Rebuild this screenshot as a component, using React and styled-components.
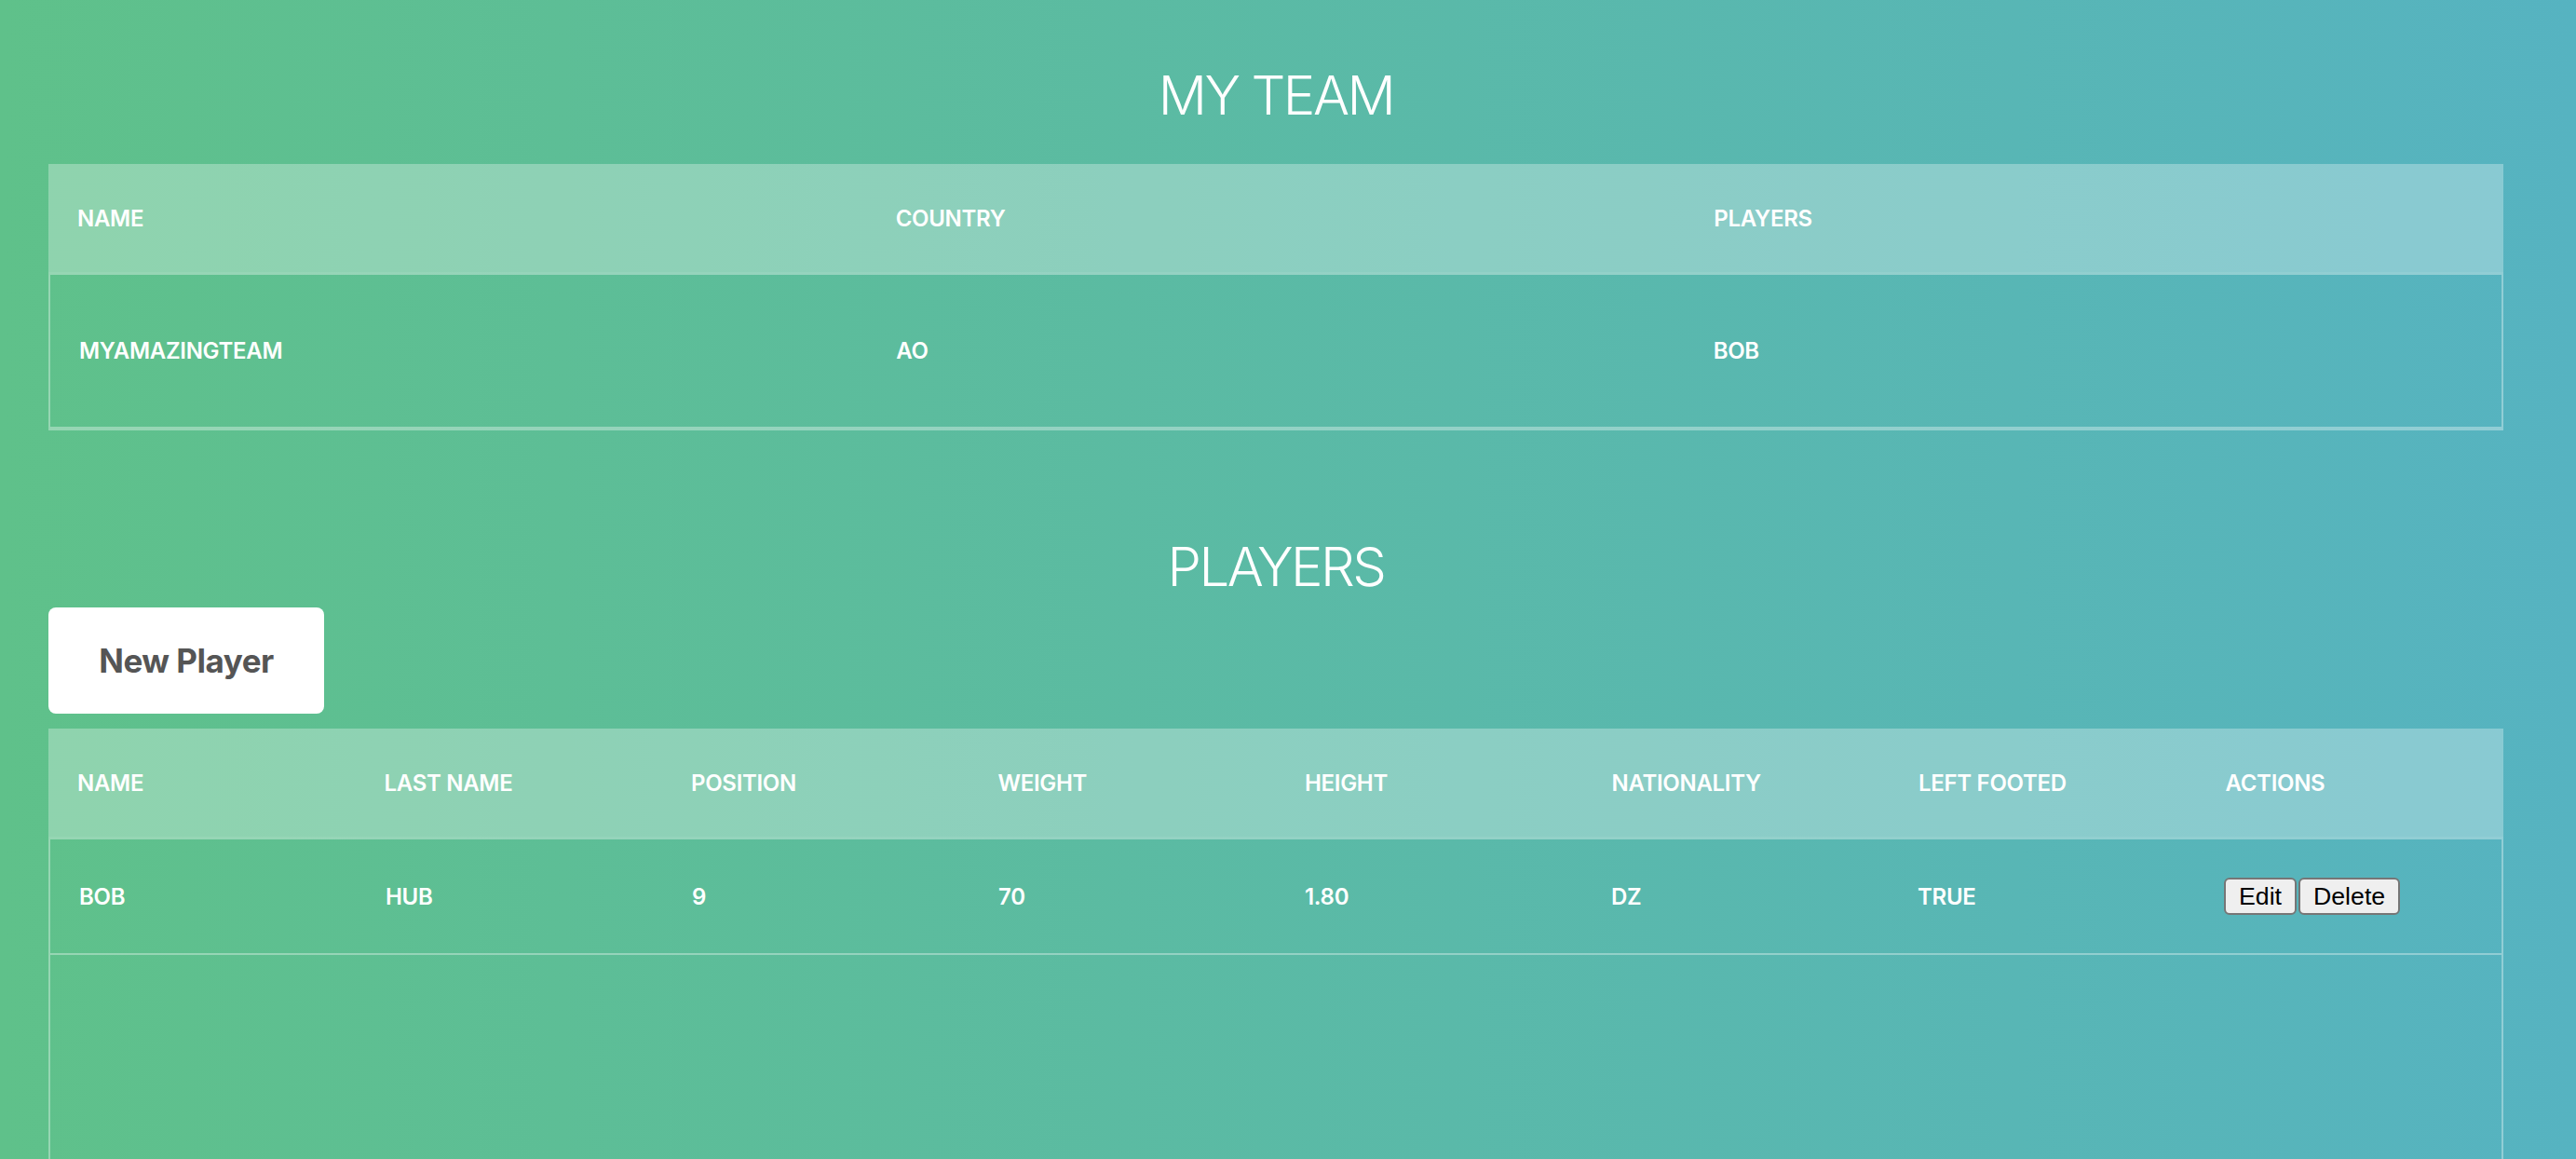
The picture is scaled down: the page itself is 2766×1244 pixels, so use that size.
import React from 'react'
import styled, { createGlobalStyle } from 'styled-components'

const GlobalStyle = createGlobalStyle`
  html, body {
    margin: 0;
    padding: 0;
    height: 100%;
    overflow: hidden;
  }
  body {
    background: linear-gradient(to right, #5fc18a, #56b3c1);
    font-family: Inter, "Noto Sans", sans-serif;
    color: #fff;
  }
`

const Page = styled.main`
  margin: 0 78px 0 52px;
  padding-top: 66px;
`

const Title = styled.h1`
  margin: 0 0 ${p => p.$gap}px;
  font-size: 58px;
  font-weight: 300;
  letter-spacing: -2.5px;
  line-height: 72px;
  text-align: center;
  text-transform: uppercase;
  color: #fff;
`

const Section = styled.section`
  margin-bottom: ${p => p.$after || 0}px;
`

const HeadRow = styled.div`
  display: grid;
  grid-template-columns: repeat(${p => p.$cols}, 1fr);
  height: 116px;
  align-items: center;
  background: rgba(255, 255, 255, 0.3);
`

const HeadCell = styled.div`
  padding: 0 31px;
  font-size: 24px;
  font-weight: 600;
  letter-spacing: -0.3px;
  text-transform: uppercase;
  color: #fff;
`

const Body = styled.div`
  border: 2px solid rgba(255, 255, 255, 0.35);
  border-top-width: 3px;
  height: ${p => (p.$height ? `${p.$height}px` : 'auto')};
`

const Row = styled.div`
  display: grid;
  grid-template-columns: repeat(${p => p.$cols}, 1fr);
  align-items: center;
  height: ${p => p.$height}px;
  border-bottom: 2px solid rgba(255, 255, 255, 0.35);
`

const Cell = styled.div`
  padding: 0 31px;
  font-size: 24px;
  font-weight: 600;
  letter-spacing: -0.3px;
  text-transform: uppercase;
  color: #fff;
  display: flex;
  gap: 2px;
`

const NewButton = styled.button`
  display: block;
  width: 296px;
  height: 114px;
  margin-bottom: 16px;
  border: none;
  border-radius: 8px;
  background: #fff;
  color: #555;
  font-family: Inter, "Noto Sans", sans-serif;
  font-size: 35px;
  font-weight: 700;
  letter-spacing: -0.5px;
  cursor: pointer;
`

const SmallButton = styled.button`
  font-family: "Liberation Sans", Arial, sans-serif;
  font-size: 26.7px;
  line-height: 30px;
  letter-spacing: 0;
  text-transform: none;
  padding: 3px 14px;
  color: #000;
  background: #efefef;
  border: 2px solid #767676;
  border-radius: 6px;
  cursor: pointer;
`

const teamCols = ['Name', 'Country', 'Players']
const playerCols = ['Name', 'Last Name', 'Position', 'Weight', 'Height', 'Nationality', 'Left Footed', 'Actions']

const players = [
  { name: 'Bob', lastName: 'Hub', position: '9', weight: '70', height: '1.80', nationality: 'DZ', leftFooted: 'true' },
]

export default function App() {
  return (
    <>
      <GlobalStyle />
      <Page>
        <Section $after={110}>
          <Title $gap={38}>My Team</Title>
          <HeadRow $cols={3}>
            {teamCols.map(c => <HeadCell key={c}>{c}</HeadCell>)}
          </HeadRow>
          <Body>
            <Row $cols={3} $height={163}>
              <Cell>myAmazingTeam</Cell>
              <Cell>AO</Cell>
              <Cell>Bob</Cell>
            </Row>
          </Body>
        </Section>

        <Section>
          <Title $gap={8}>Players</Title>
          <NewButton>New Player</NewButton>
          <HeadRow $cols={8}>
            {playerCols.map(c => <HeadCell key={c}>{c}</HeadCell>)}
          </HeadRow>
          <Body $height={600}>
            {players.map(p => (
              <Row $cols={8} $height={122} key={p.name}>
                <Cell>{p.name}</Cell>
                <Cell>{p.lastName}</Cell>
                <Cell>{p.position}</Cell>
                <Cell>{p.weight}</Cell>
                <Cell>{p.height}</Cell>
                <Cell>{p.nationality}</Cell>
                <Cell>{p.leftFooted}</Cell>
                <Cell>
                  <SmallButton>Edit</SmallButton>
                  <SmallButton>Delete</SmallButton>
                </Cell>
              </Row>
            ))}
          </Body>
        </Section>
      </Page>
    </>
  )
}
